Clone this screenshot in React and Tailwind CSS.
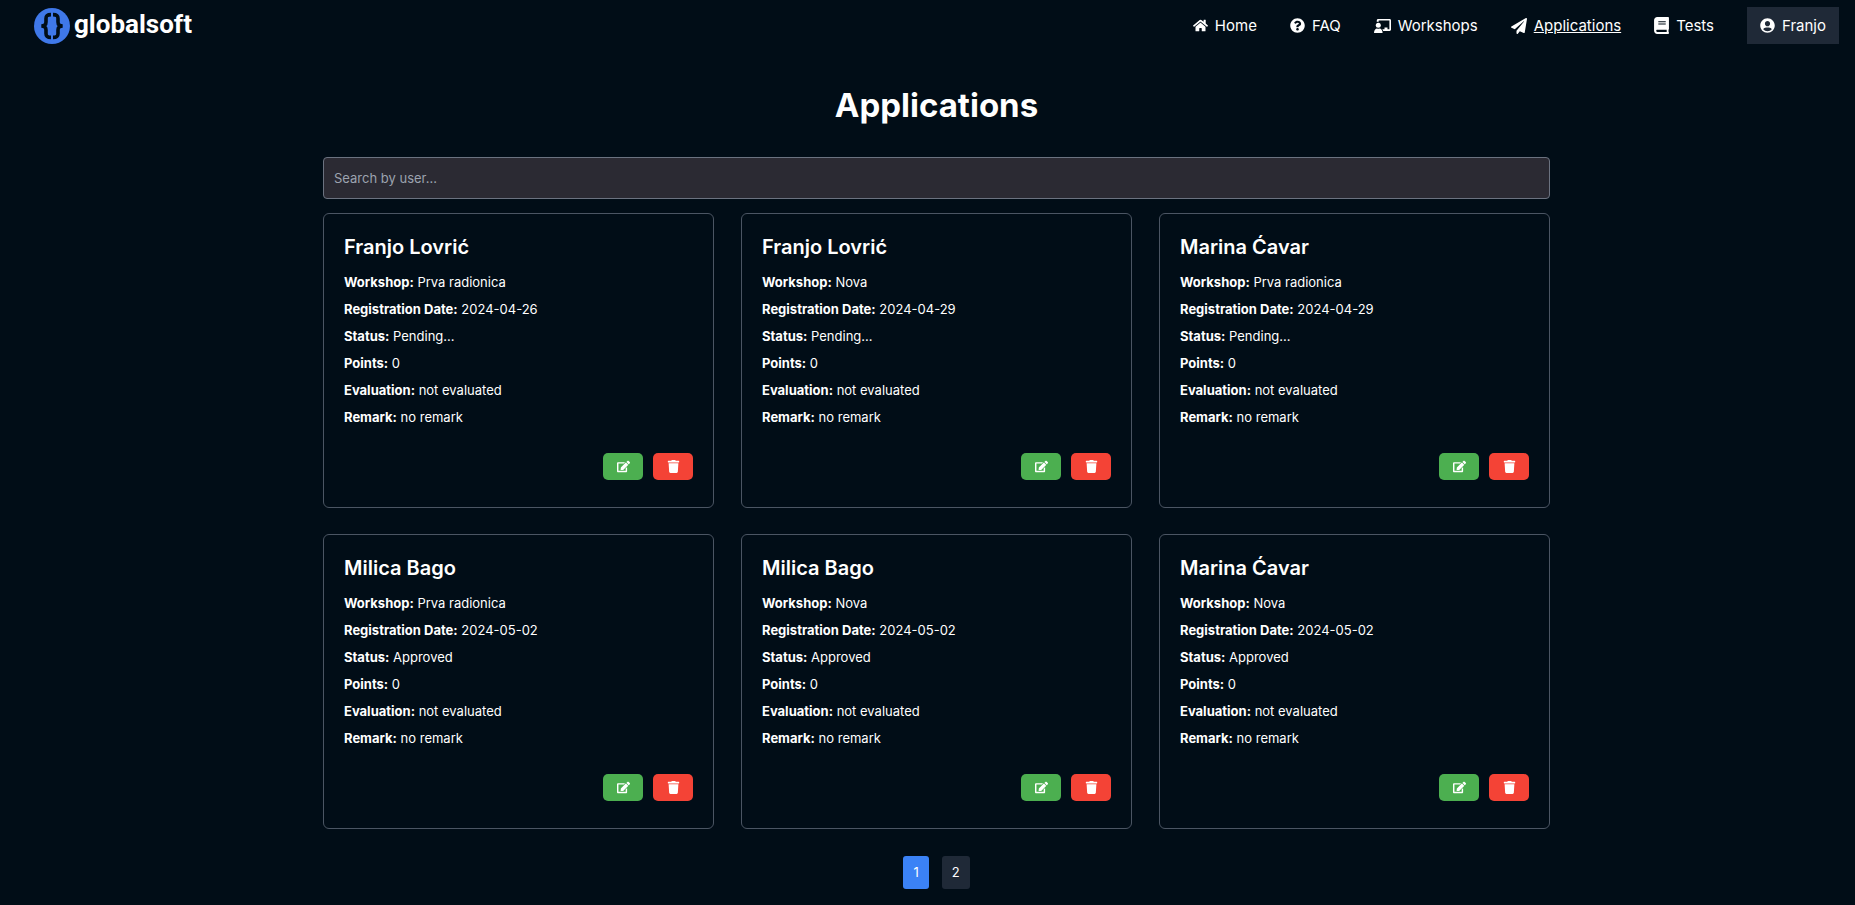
import React, { useState } from "react";
import {
  FaHome,
  FaQuestionCircle,
  FaPaperPlane,
  FaBook,
  FaUserCircle,
  FaEdit,
  FaTrash,
} from "react-icons/fa";

const applications = [
  { user: "Franjo Lovrić", workshop: "Prva radionica", date: "2024-04-26", status: "Pending..." },
  { user: "Franjo Lovrić", workshop: "Nova", date: "2024-04-29", status: "Pending..." },
  { user: "Marina Ćavar", workshop: "Prva radionica", date: "2024-04-29", status: "Pending..." },
  { user: "Milica Bago", workshop: "Prva radionica", date: "2024-05-02", status: "Approved" },
  { user: "Milica Bago", workshop: "Nova", date: "2024-05-02", status: "Approved" },
  { user: "Marina Ćavar", workshop: "Nova", date: "2024-05-02", status: "Approved" },
];

function WorkshopIcon() {
  return (
    <svg viewBox="0 0 17 14" className="h-[14px] w-[17px]" fill="currentColor" aria-hidden="true">
      <circle cx="4.3" cy="6.200" r="2.500" />
      <path d="M0 14c0-3 1.600-4.500 3-4.500.8.400 1.800.400 2.600 0 1.500 0 3 1.500 3 4.500z" />
      <path d="M4.200 0h11.400c.8 0 1.400.6 1.400 1.400v9.200c0 .8-.6 1.400-1.400 1.400H9.200c-.2-.7-.5-1.200-1-1.700h2.300V8.600h3v1.700h1.900V1.600H4.700v1.200c-.7-.1-1.300 0-1.900.2V1.400C2.800.6 3.400 0 4.200 0z" />
    </svg>
  );
}

function Logo() {
  return (
    <a href="#home" className="flex items-center gap-1">
      <svg viewBox="0 0 36 36" className="size-9" aria-hidden="true">
        <circle cx="18" cy="18" r="18" fill="#3f78e9" />
        <g fill="none" stroke="#010d17" strokeWidth="3.600">
          <path d="M17 6.600c-3.800 0-5 1.300-5 4v3.400c0 2.600-1.200 4-4.700 4 3.500 0 4.700 1.400 4.700 4v3.400c0 2.700 1.200 4 5 4" />
          <path d="M19 6.600c3.800 0 5 1.300 5 4v3.400c0 2.600 1.200 4 4.700 4-3.500 0-4.700 1.400-4.700 4v3.400c0 2.700-1.200 4-5 4" />
        </g>
      </svg>
      <span className="pb-[3px] font-['Roboto',sans-serif] text-[26px] leading-8 font-bold">globalsoft</span>
    </a>
  );
}

const links = [
  { label: "Home", href: "#home", icon: <FaHome /> },
  { label: "FAQ", href: "#faq", icon: <FaQuestionCircle /> },
  { label: "Workshops", href: "#workshops", icon: <WorkshopIcon /> },
  { label: "Applications", href: "#applications", icon: <FaPaperPlane className="size-4" />, active: true },
  { label: "Tests", href: "#tests", icon: <FaBook className="h-[17px] w-[15px]" /> },
];

function Header() {
  return (
    <header className="flex items-center justify-between pt-[7px] pr-4 pl-[34px]">
      <Logo />
      <nav className="flex items-center gap-[33px] text-[15px] leading-[21px]">
        {links.map((link) => (
          <a key={link.label} href={link.href} className="flex items-center gap-[7px]">
            {link.icon}
            <span className={link.active ? "underline" : ""}>{link.label}</span>
          </a>
        ))}
        <button type="button" className="flex items-center gap-[7px] bg-[#1f2937] px-[13px] py-2">
          <FaUserCircle />
          Franjo
        </button>
      </nav>
    </header>
  );
}

function Field({ label, children }) {
  return (
    <p className="mb-2 leading-[19px]">
      <strong className="font-bold">{label}:</strong> {children}
    </p>
  );
}

function Card({ item }) {
  return (
    <article className="rounded-md border border-[#4b5563] px-5 pt-[21px] pb-[27px]">
      <h2 className="mb-[13px] text-[20px] leading-[25px] font-semibold">{item.user}</h2>
      <Field label="Workshop">{item.workshop}</Field>
      <Field label="Registration Date">{item.date}</Field>
      <Field label="Status">{item.status}</Field>
      <Field label="Points">0</Field>
      <Field label="Evaluation">not evaluated</Field>
      <Field label="Remark">no remark</Field>
      <div className="mt-[26px] flex justify-end gap-[10px]">
        <button type="button" aria-label="Edit" className="flex h-[27px] w-10 items-center justify-center rounded-[5px] bg-[#4caf50]">
          <FaEdit />
        </button>
        <button type="button" aria-label="Delete" className="flex h-[27px] w-10 items-center justify-center rounded-[5px] bg-[#f44336]">
          <FaTrash />
        </button>
      </div>
    </article>
  );
}

export default function App() {
  const [search, setSearch] = useState("");
  return (
    <div className="min-h-screen bg-[#010d17] font-['Inter',sans-serif] text-[13px] text-white">
      <Header />
      <main className="pl-[18px]">
        <div className="mx-auto max-w-[1227px]">
          <h1 className="pt-10 text-center text-[33px] leading-[43px] font-bold">Applications</h1>
          <input
            type="text"
            aria-label="Search by user"
            placeholder="Search by user..."
            value={search}
            onChange={(e) => setSearch(e.target.value)}
            className="mt-[30px] h-[42px] w-full rounded border border-[#6b7280] bg-[#2b2a33] px-[10px] placeholder:text-[#9ca3af]"
          />
          <div className="mt-[14px] grid grid-cols-3 gap-x-[27px] gap-y-[26px]">
            {applications.map((item, i) => (
              <Card key={i} item={item} />
            ))}
          </div>
          <div className="mt-[27px] flex justify-center gap-[13px]">
            <button type="button" className="h-[33px] rounded-[3px] bg-[#3b82f6] px-[10px]">1</button>
            <button type="button" className="h-[33px] rounded-[3px] bg-[#1f2937] px-[10px]">2</button>
          </div>
        </div>
      </main>
    </div>
  );
}
